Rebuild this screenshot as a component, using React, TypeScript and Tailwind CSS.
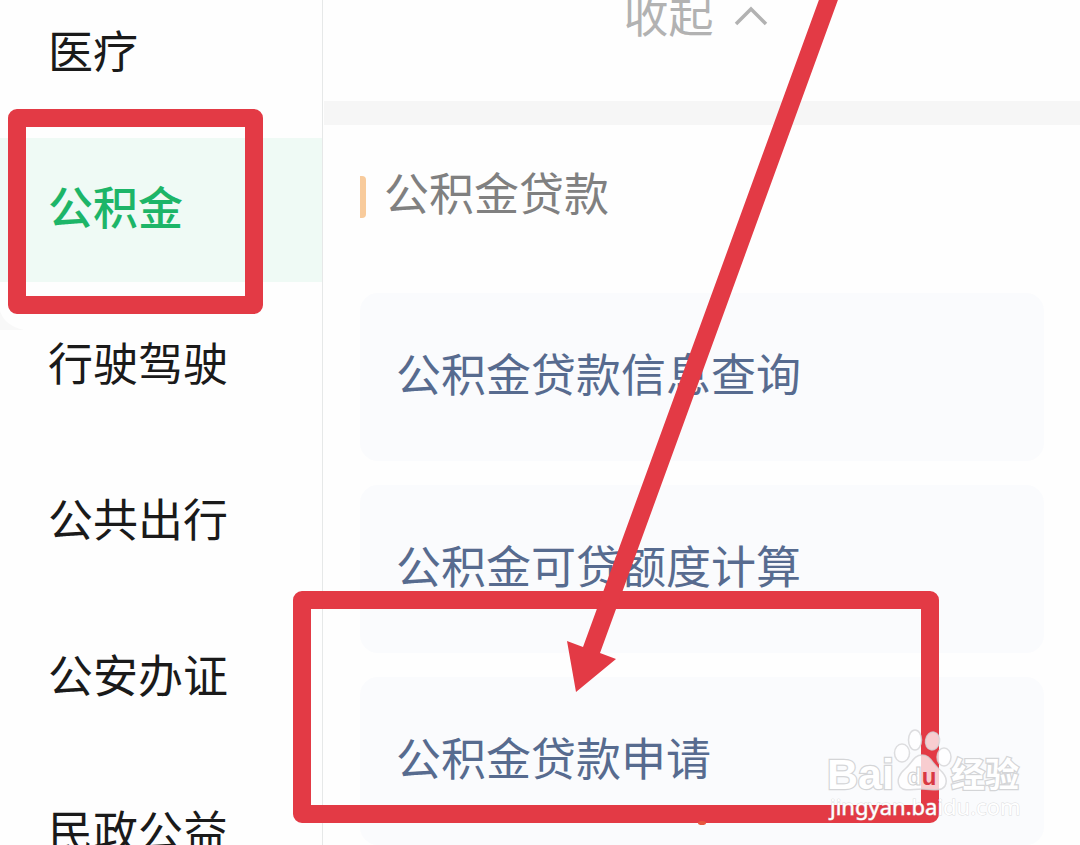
const categories = [
  { name: "医疗", active: false },
  { name: "公积金", active: true },
  { name: "行驶驾驶", active: false },
  { name: "公共出行", active: false },
  { name: "公安办证", active: false },
  { name: "民政公益", active: false },
];

const services = ["公积金贷款信息查询", "公积金可贷额度计算", "公积金贷款申请"];

function Sidebar() {
  return (
    <nav className="w-[323px] shrink-0 border-r border-[#e6e8e8]">
      <ul className="-mt-[18px] flex flex-col gap-3">
        {categories.map((c) => (
          <li key={c.name}>
            <button
              type="button"
              className={
                c.active
                  ? "flex h-36 w-full items-center bg-[#effaf5] pb-[10px] pl-12 text-left font-medium text-[#1db568]"
                  : "flex h-36 w-full items-center pb-[10px] pl-12 text-left text-[#1a1a1a]"
              }
            >
              {c.name}
            </button>
          </li>
        ))}
      </ul>
    </nav>
  );
}

function Content() {
  return (
    <main className="min-w-0 flex-1">
      <div className="flex h-[101px] justify-center pr-3">
        <button type="button" className="-mt-1 flex h-9 items-center gap-5 leading-9 text-[#b2b2b2]">
          收起
          <svg viewBox="0 0 34 20" className="mt-1 h-5 w-[34px]" fill="none" stroke="currentColor" strokeWidth="3.5">
            <path d="M2 18 17 3l15 15" />
          </svg>
        </button>
      </div>
      <div className="ml-px h-6 bg-[#f6f6f6]" />
      <section className="pl-[37px] pr-9">
        <h2 className="flex h-[168px] items-start gap-[18px] pt-[39px] leading-[56px] text-[#808080]">
          <span className="mt-3 h-[42px] w-[6px] rounded-r-sm bg-[#f8cb9c]" />
          公积金贷款
        </h2>
        <ul className="flex flex-col gap-6">
          {services.map((s) => (
            <li key={s}>
              <button
                type="button"
                className="flex h-[168px] w-full items-center rounded-[18px] bg-[#fafbfd] pb-[10px] pl-9 text-left text-[#576b8f]"
              >
                {s}
              </button>
            </li>
          ))}
        </ul>
      </section>
    </main>
  );
}

function Annotations() {
  return (
    <svg
      className="pointer-events-none absolute left-0 top-0 h-[845px] w-[1080px]"
      viewBox="0 0 1080 845"
      fill="none"
    >
      <path d="M0 311Q5 326 24 330H0Z" fill="#f8f8f8" />
      <g stroke="#e33a45" strokeWidth="18" strokeLinejoin="round">
        <rect x="17" y="118" width="237" height="187" />
        <rect x="302" y="600" width="628" height="214" />
      </g>
      <path d="M820-3H839L600 653 616 659 576 692 567 641 583 647Z" fill="#e33a45" />
      <ellipse cx="702" cy="823" rx="4" ry="2" fill="#e8573f" />
    </svg>
  );
}

function Watermark() {
  return (
    <svg
      className="pointer-events-none absolute left-[820px] top-[720px] h-[110px] w-[220px]"
      viewBox="820 720 220 110"
    >
      <g fill="#ffffff" fillOpacity="0.75" stroke="#d4d5d7" strokeOpacity="0.8" strokeWidth="1.5">
        <ellipse cx="902" cy="753" rx="7.5" ry="9" />
        <ellipse cx="915" cy="740" rx="6.5" ry="10" />
        <ellipse cx="932.5" cy="741" rx="7" ry="9" transform="rotate(10 932.5 741)" />
        <ellipse cx="944" cy="757" rx="7" ry="9" />
        <path d="M922 755C930 755 932 763 939 769C945 774 948 780 945 786C941 792 932 789 922 789C912 789 905 792 900 787C896 781 899 774 905 769C912 763 914 755 922 755Z" />
      </g>
      <g fill="#ffffff" stroke="#d4d5d7" strokeWidth="2.5" paintOrder="stroke">
        <text x="827" y="789" fontSize="43" fontWeight="700" fontFamily="Liberation Sans, Arial, sans-serif">
          Bai
        </text>
        <text x="951" y="787" fontSize="34" fontWeight="700" fontFamily="'Noto Sans CJK SC', sans-serif">
          经验
        </text>
        <text x="830" y="815" fontSize="22" strokeWidth="1" strokeOpacity="0.8" fontFamily="'Noto Sans', sans-serif">
          jingyan.baidu.com
        </text>
      </g>
      <text x="907" y="785" fontSize="24" fontWeight="700" fontFamily="Liberation Sans, Arial, sans-serif">
        <tspan fill="#ffffff" stroke="#d0d1d3" strokeWidth="1">d</tspan>
        <tspan fill="#d93843">u</tspan>
      </text>
    </svg>
  );
}

export default function App() {
  return (
    <div
      lang="zh-CN"
      className="relative flex h-screen overflow-hidden bg-[#fefefe] font-['Noto_Sans_CJK_SC',sans-serif] text-[45px] leading-none"
    >
      <Sidebar />
      <Content />
      <Annotations />
      <Watermark />
    </div>
  );
}
